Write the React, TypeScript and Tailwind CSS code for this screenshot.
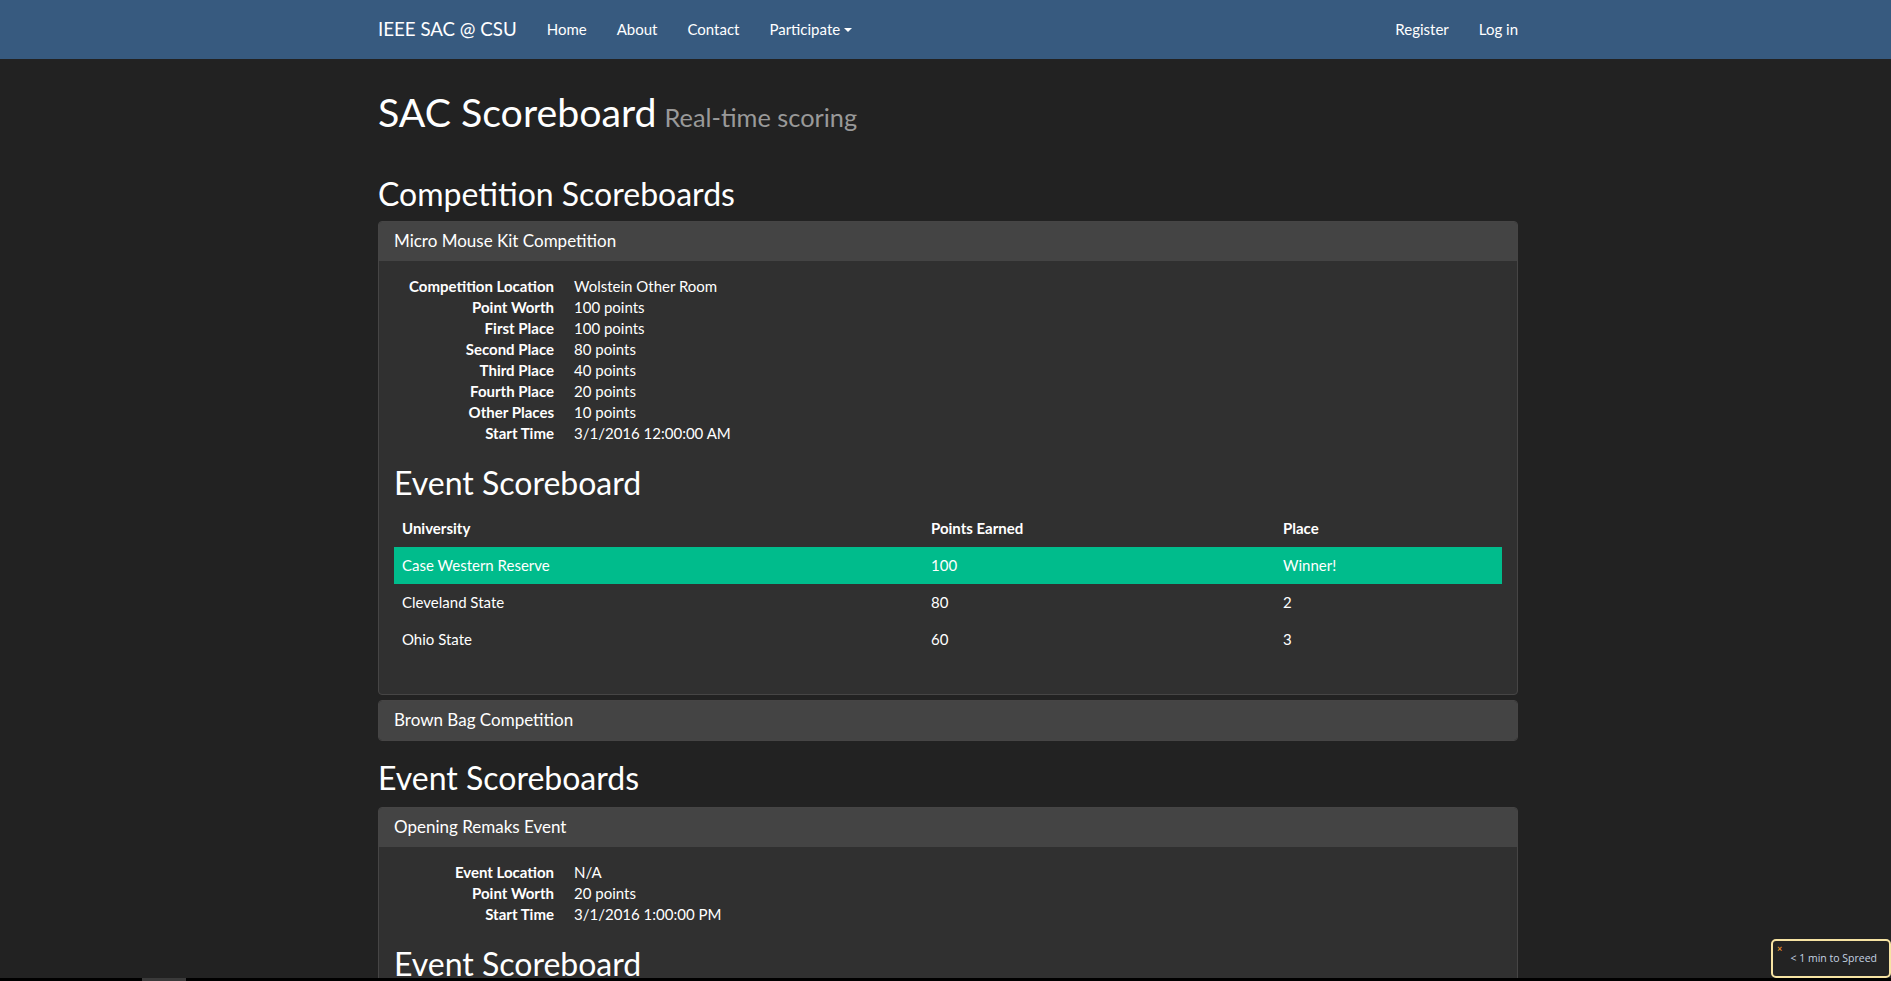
import { Fragment } from 'react'

const competitionInfo = [
    ['Competition Location', 'Wolstein Other Room'],
    ['Point Worth', '100 points'],
    ['First Place', '100 points'],
    ['Second Place', '80 points'],
    ['Third Place', '40 points'],
    ['Fourth Place', '20 points'],
    ['Other Places', '10 points'],
    ['Start Time', '3/1/2016 12:00:00 AM'],
]

const eventInfo = [
    ['Event Location', 'N/A'],
    ['Point Worth', '20 points'],
    ['Start Time', '3/1/2016 1:00:00 PM'],
]

const results = [
    { university: 'Case Western Reserve', points: '100', place: 'Winner!', winner: true },
    { university: 'Cleveland State', points: '80', place: '2', winner: false },
    { university: 'Ohio State', points: '60', place: '3', winner: false },
]

function InfoList({ rows }: { rows: string[][] }) {
    return (
        <dl className="grid grid-cols-[160px_1fr] gap-x-[20px] text-[15px] leading-[21px] mb-[21px]">
            {rows.map(([label, value]) => (
                <Fragment key={label}>
                    <dt className="font-bold text-right">{label}</dt>
                    <dd>{value}</dd>
                </Fragment>
            ))}
        </dl>
    )
}

function Scoreboard({ rows }: { rows: typeof results }) {
    return (
        <>
            <h2 className="text-[32px] leading-[35px] mb-[10px]">Event Scoreboard</h2>
            <table className="w-full table-fixed text-[15px] leading-[21px] mb-[21px]">
                <colgroup>
                    <col className="w-[529px]" />
                    <col className="w-[352px]" />
                    <col />
                </colgroup>
                <thead>
                    <tr>
                        <th className="p-[8px] text-left font-bold">University</th>
                        <th className="p-[8px] text-left font-bold">Points Earned</th>
                        <th className="p-[8px] text-left font-bold">Place</th>
                    </tr>
                </thead>
                <tbody>
                    {rows.map(r => (
                        <tr key={r.university} className={r.winner ? 'bg-[#00bc8c]' : ''}>
                            <td className="p-[8px]">{r.university}</td>
                            <td className="p-[8px]">{r.points}</td>
                            <td className="p-[8px]">{r.place}</td>
                        </tr>
                    ))}
                </tbody>
            </table>
        </>
    )
}

function Panel({ title, children }: { title: string, children?: React.ReactNode }) {
    return (
        <div className="border border-[#464545] rounded-[4px] bg-[#303030] overflow-hidden">
            <div className="bg-[#444] px-[15px] pt-[9px] pb-[11px] text-[17px] leading-[19px]">{title}</div>
            {children && <div className="px-[15px] pt-[15px] pb-[15px]">{children}</div>}
        </div>
    )
}

export default function App() {
    return (
        <div className="min-h-screen bg-[#222] text-white font-['Lato','Open_Sans',sans-serif]">
            {/* Navbar */}
            <nav className="bg-[#375a7f] pl-[5px]">
                <div className="mx-auto w-[1140px] h-[59px] flex items-center text-[15px]">
                    <a className="text-[18.7px] pr-[15px] leading-[21px]">IEEE SAC @ CSU</a>
                    <a className="px-[15px]">Home</a>
                    <a className="px-[15px]">About</a>
                    <a className="px-[15px]">Contact</a>
                    <a className="px-[15px] flex items-center">
                        Participate
                        <span className="ml-[4px] w-0 h-0 border-x-[4px] border-t-[4px] border-x-transparent border-t-white"></span>
                    </a>
                    <div className="ml-auto flex items-center -mr-[15px]">
                        <a className="px-[15px]">Register</a>
                        <a className="px-[15px]">Log in</a>
                    </div>
                </div>
            </nav>

            <main className="pl-[5px] pb-[40px]">
                <div className="mx-auto w-[1140px]">
                    <h1 className="mt-[31px] text-[39.3px] leading-[43px]">
                        SAC Scoreboard <small className="-ml-[2px] text-[25.35px] leading-none text-[#999]">Real-time scoring</small>
                    </h1>

                    <h2 className="mt-[43px] mb-[10px] text-[32px] leading-[35px]">Competition Scoreboards</h2>
                    <div className="flex flex-col gap-[5px]">
                        <Panel title="Micro Mouse Kit Competition">
                            <InfoList rows={competitionInfo} />
                            <Scoreboard rows={results} />
                        </Panel>
                        <Panel title="Brown Bag Competition" />
                    </div>

                    <h2 className="mt-[19px] mb-[12px] text-[32px] leading-[35px]">Event Scoreboards</h2>
                    <Panel title="Opening Remaks Event">
                        <InfoList rows={eventInfo} />
                        <Scoreboard rows={[]} />
                    </Panel>
                </div>
            </main>

            {/* Bottom-right widget */}
            <div className="fixed right-0 bottom-[3px] w-[120px] h-[39px] border-2 border-[#f6e3a3] rounded-[5px] bg-[#232323] flex items-center justify-end pr-[12px]">
                <span className="absolute left-[4px] top-[3px] text-[9px] leading-[9px] font-bold text-[#e8912a]">×</span>
                <span className="text-[10.5px] text-[#c5d3e2] font-['Open_Sans',sans-serif]">&lt; 1 min to Spreed</span>
            </div>
            <div className="fixed left-0 right-0 bottom-0 h-[3px] bg-black">
                <div className="absolute left-[142px] w-[44px] h-full bg-[#3a3a3a]"></div>
            </div>
        </div>
    )
}
